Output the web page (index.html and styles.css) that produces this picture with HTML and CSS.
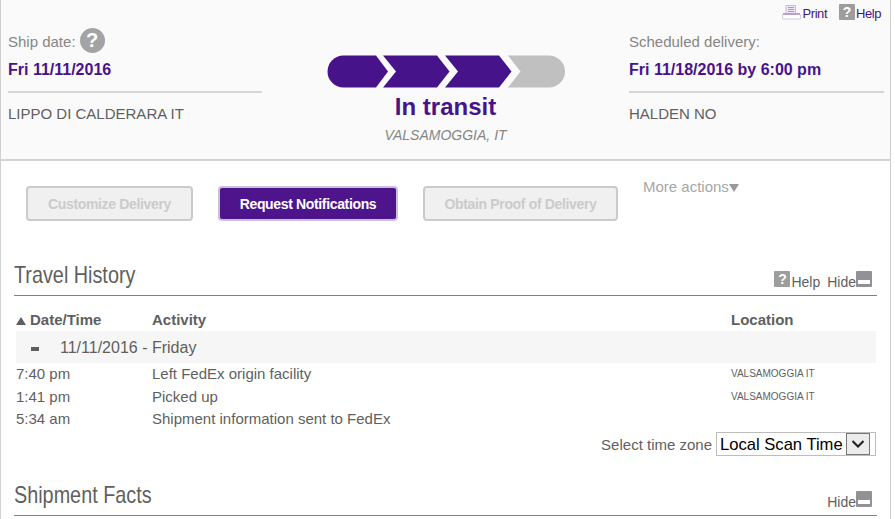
FILE: index.html
```html
<!doctype html>
<html lang="en">
    <head>
        <meta charset="UTF-8" />
        <meta name="viewport" content="width=device-width, initial-scale=1.0" />
        <title>Shipment Tracking</title>
        <link rel="stylesheet" href="styles.css">
    </head>
    <body>
        <div class="container">
            <div class="summary">
                <div class="tools">
                    <a class="print">
                        <svg width="19" height="16" viewBox="0 0 19 16">
                            <path d="M4 10V1.500h9.500V10z" fill="#eee6f5" stroke="#c9b6de" />
                            <path d="M6 3.500h6M6 5.500h6M6 7.500h6" stroke="#b194d0" />
                            <path d="M0.500 10.500h18v4.500h-18z" fill="#fff" stroke="#d6cae4" />
                            <path d="M1 10h17" stroke="#b7a0d2" stroke-width="2" />
                        </svg>
                        <span>Print</span>
                    </a>
                    <a class="help">
                        <span class="help-icon">?</span>
                        <span>Help</span>
                    </a>
                </div>
                <div class="summary-grid">
                    <div class="place">
                        <div class="label">Ship date: <span class="round-help">?</span></div>
                        <div class="date">Fri 11/11/2016</div>
                        <div class="city">LIPPO DI CALDERARA IT</div>
                    </div>
                    <div class="status">
                        <svg width="238" height="33" viewBox="0 0 238 33">
                            <path d="M16.500 0.500H49L61 16.500L49 32.500H16.500A16 16 0 0 1 16.500 0.500z" fill="#47138b" />
                            <path d="M56 0.500H110L122.500 16.500L110 32.500H56L69 16.500z" fill="#47138b" />
                            <path d="M118 0.500H172L184.500 16.500L172 32.500H118L131 16.500z" fill="#47138b" />
                            <path d="M181 0.500H222A16 16 0 0 1 222 32.500H181L193.500 16.500z" fill="#c0c0c0" />
                        </svg>
                        <div class="status-text">In transit</div>
                        <div class="status-city">VALSAMOGGIA, IT</div>
                    </div>
                    <div class="place">
                        <div class="label">Scheduled delivery:</div>
                        <div class="date">Fri 11/18/2016 by 6:00 pm</div>
                        <div class="city">HALDEN NO</div>
                    </div>
                </div>
            </div>

            <div class="actions">
                <button class="button customize" disabled>Customize Delivery</button>
                <button class="button primary">Request Notifications</button>
                <button class="button proof" disabled>Obtain Proof of Delivery</button>
                <a class="more">More actions<span class="arrow-down"></span></a>
            </div>

            <div class="section-head">
                <h2>Travel History</h2>
                <div class="section-tools">
                    <span class="help-icon">?</span><span>Help</span>
                    <span class="hide">Hide</span><span class="minus"></span>
                </div>
            </div>
            <div class="history">
                <div class="row head">
                    <div><span class="arrow-up"></span>Date/Time</div>
                    <div>Activity</div>
                    <div>Location</div>
                </div>
                <div class="day"><span class="dash"></span>11/11/2016 - Friday</div>
                <div class="row">
                    <div>7:40 pm</div>
                    <div>Left FedEx origin facility</div>
                    <div class="location">VALSAMOGGIA IT</div>
                </div>
                <div class="row">
                    <div>1:41 pm</div>
                    <div>Picked up</div>
                    <div class="location">VALSAMOGGIA IT</div>
                </div>
                <div class="row">
                    <div>5:34 am</div>
                    <div>Shipment information sent to FedEx</div>
                    <div class="location"></div>
                </div>
            </div>
            <div class="timezone">
                <label for="timezone">Select time zone</label>
                <div class="select-box">
                    <select id="timezone">
                        <option>Local Scan Time</option>
                    </select>
                    <span class="select-arrow">
                        <svg width="12" height="8" viewBox="0 0 12 8">
                            <path d="M0.500 1L6 6.500L11.500 1" fill="none" stroke="#222" stroke-width="2" />
                        </svg>
                    </span>
                </div>
            </div>

            <div class="section-head facts">
                <h2>Shipment Facts</h2>
                <div class="section-tools">
                    <span class="hide">Hide</span><span class="minus"></span>
                </div>
            </div>
        </div>
    </body>
</html>
```
FILE: styles.css
```css
* {
    box-sizing: border-box;
}
body {
    font-family: "Liberation Sans", Arial, sans-serif;
    font-size: 15px;
    margin: 0;
    color: #5f5f5f;
    background: #fff;
    overflow: hidden;
}
.container {
    width: 891px;
    height: 519px;
    border-left: 1px solid #d0d0d0;
    border-right: 1px solid #cfcfcf;
    overflow: hidden;
}
.summary {
    height: 161px;
    background: #fafafa;
    border-bottom: 2px solid #d3d3d3;
}
.tools {
    display: flex;
    justify-content: flex-end;
    height: 27px;
    padding: 4px 9px 0 0;
    font-size: 13px;
    line-height: 19px;
    letter-spacing: -0.45px;
    color: #47138b;
}
.print,
.help {
    display: flex;
}
.print {
    gap: 2px;
    margin-right: 12px;
}
.help {
    gap: 1px;
}
.help-icon {
    width: 16px;
    height: 16px;
    border-radius: 1px;
    background: #9d9d9d;
    color: #fff;
    font-size: 14px;
    font-weight: bold;
    line-height: 16px;
    letter-spacing: 0;
    text-align: center;
}
.summary-grid {
    display: grid;
    grid-template-columns: 254px 367px 255px;
    padding-left: 7px;
}
.label {
    display: flex;
    align-items: center;
    height: 28px;
    color: #868686;
}
.round-help {
    width: 25px;
    height: 25px;
    margin: -1px 0 0 4px;
    border-radius: 50%;
    background: #a3a3a6;
    color: #fff;
    font-size: 20px;
    font-weight: bold;
    line-height: 25px;
    text-align: center;
}
.date {
    height: 38px;
    border-bottom: 2px solid #d6d6d6;
    color: #47138b;
    font-size: 16px;
    font-weight: bold;
    line-height: 29px;
}
.city {
    line-height: 42px;
}
.status {
    display: flex;
    flex-direction: column;
    align-items: center;
    padding-top: 28px;
}
.status-text {
    color: #47138b;
    font-size: 24px;
    font-weight: bold;
    line-height: 38px;
}
.status-city {
    color: #868686;
    font-size: 14px;
    font-style: italic;
    line-height: 18px;
}
.actions {
    display: flex;
    gap: 25px;
    height: 98px;
    padding: 25px 0 0 25px;
}
.button {
    height: 35px;
    padding: 0;
    border: 2px solid #cbcbcb;
    border-radius: 4px;
    background: #f0f0f0;
    color: #cbcbcb;
    font-family: inherit;
    font-size: 14px;
    font-weight: bold;
    letter-spacing: -0.35px;
}
.customize {
    width: 167px;
}
.primary {
    width: 180px;
    border-color: #cbbfd9;
    background: #4d148c;
    color: #fff;
}
.proof {
    width: 195px;
}
.more {
    margin-top: -2px;
    color: #a6a6a6;
    line-height: 3px;
}
.arrow-down {
    display: inline-block;
    border: 5px solid transparent;
    border-top: 8px solid #999;
    border-bottom: 0;
}
.section-head {
    display: flex;
    justify-content: space-between;
    width: 863px;
    height: 37px;
    margin-left: 13px;
    border-bottom: 1px solid #808080;
}
h2 {
    margin: 0;
    font-size: 24px;
    font-weight: normal;
    line-height: 32px;
    white-space: nowrap;
    transform: scaleX(0.825);
    transform-origin: left;
}
.section-tools {
    display: flex;
    align-items: flex-start;
    padding: 12px 5px 0 0;
    font-size: 14px;
    line-height: 23px;
}
.section-tools .help-icon {
    margin-right: 1px;
}
.hide {
    margin-left: 7px;
}
.minus {
    width: 16px;
    height: 16px;
    border: 2px solid #929296;
    border-width: 9px 2px 3px;
    border-radius: 1px;
    background: #fff;
}
.history {
    width: 860px;
    margin-left: 15px;
    padding-top: 12px;
}
.row {
    display: grid;
    grid-template-columns: 136px 579px 145px;
    height: 22.5px;
    line-height: 22px;
}
.head {
    height: 23px;
    font-weight: bold;
    line-height: 24px;
}
.arrow-up {
    display: inline-block;
    margin-right: 4px;
    border: 5px solid transparent;
    border-bottom: 8px solid #5f5f5f;
    border-top: 0;
}
.day {
    display: flex;
    align-items: center;
    height: 32px;
    padding-top: 2px;
    background: #f6f6f6;
    font-size: 16px;
}
.dash {
    width: 8px;
    height: 4px;
    margin: 2px 21px 0 15px;
    background: #5f5f5f;
}
.location {
    font-size: 10px;
}
.timezone {
    display: flex;
    justify-content: flex-end;
    align-items: center;
    width: 875px;
    gap: 4px;
    margin-top: 1px;
}
.timezone label {
    padding-top: 2px;
}
.select-box {
    display: flex;
    width: 160px;
    height: 24px;
    border: 1px solid #bdbdbd;
}
select {
    width: 129px;
    padding: 1px 0 0 3px;
    border: 0;
    background: #fff;
    color: #000;
    font-family: inherit;
    font-size: 16.6px;
    appearance: none;
}
.select-arrow {
    display: flex;
    align-items: center;
    justify-content: center;
    width: 24px;
    height: 22px;
    border: 1px solid #777;
    background: #ececec;
}
.facts {
    margin-top: 23px;
}
```
